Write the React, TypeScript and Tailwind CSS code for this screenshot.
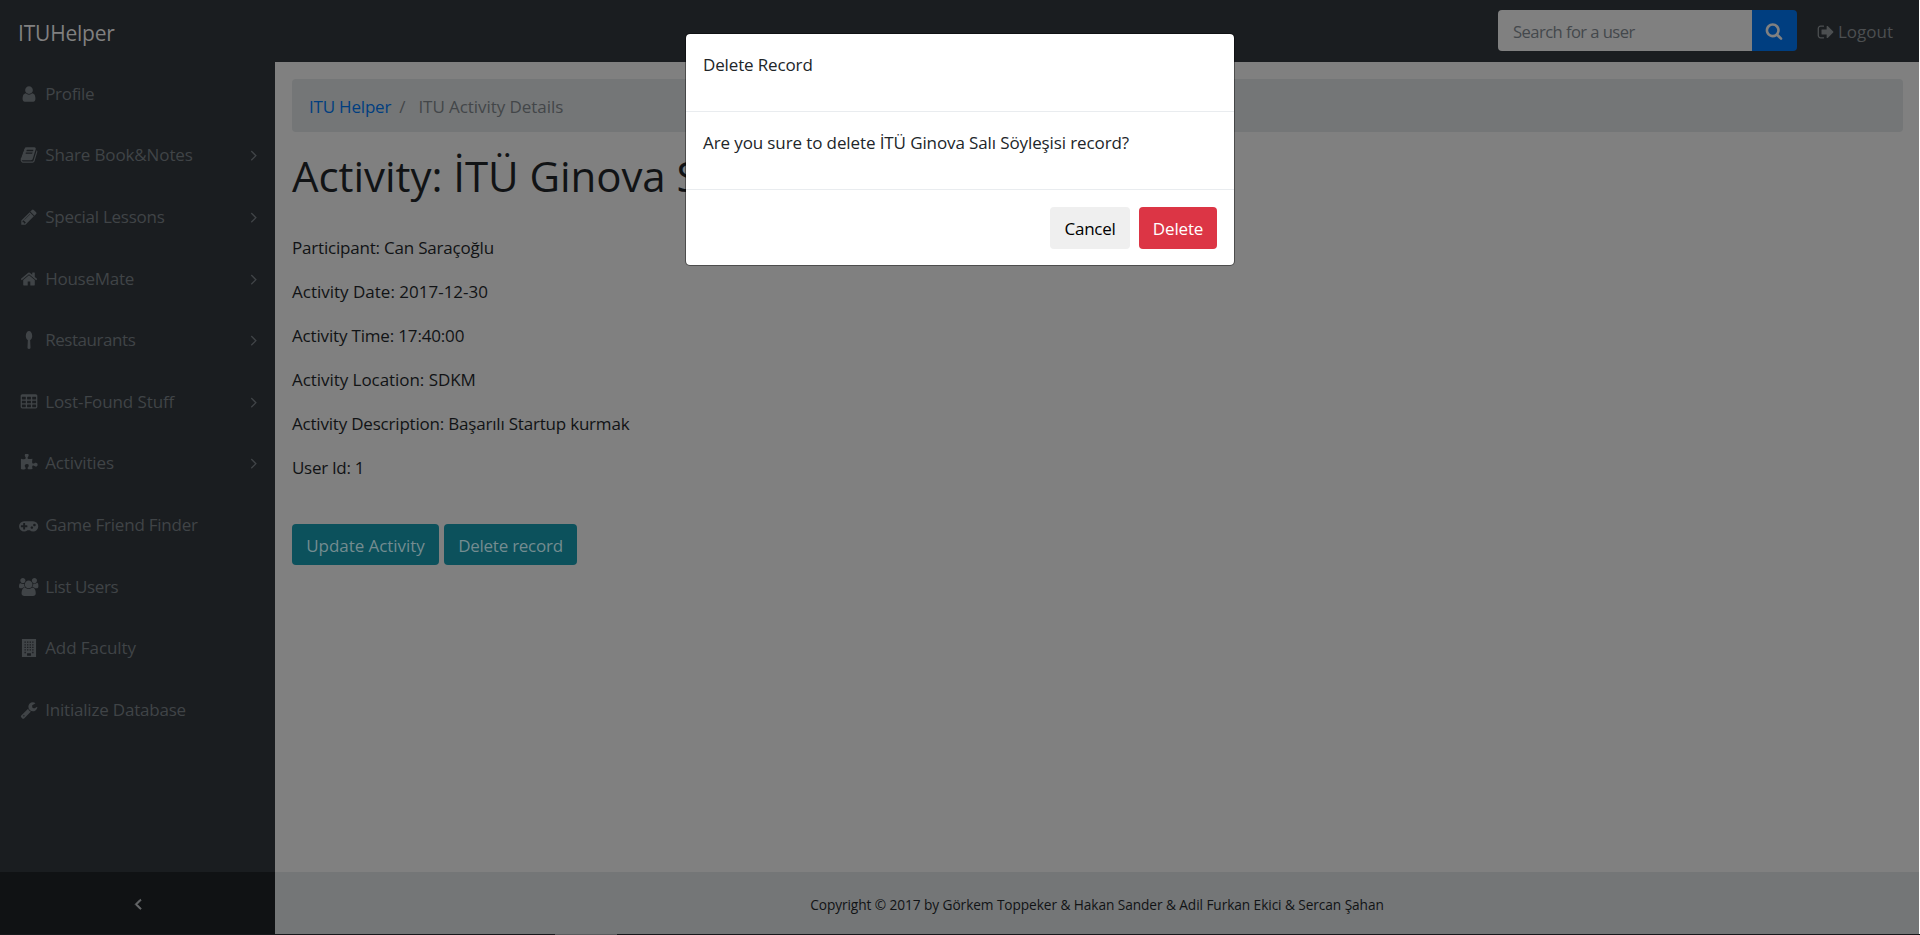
import React from "react";

type Glyph = { box: string; w: string; d: string };

const user: Glyph = { box: "0 0 1792 1792", w: "w-[18px]", d: "M1536 1399q0 109-62.5 187t-150.5 78h-854q-88 0-150.5-78t-62.5-187q0-85 8.5-160.5t31.5-152 58.5-131 94-89 134.5-34.5q131 128 313 128t313-128q76 0 134.5 34.5t94 89 58.5 131 31.5 152 8.5 160.5zm-256-887q0 159-112.5 271.5t-271.5 112.5-271.5-112.5-112.5-271.5 112.5-271.5 271.5-112.5 271.5 112.5 112.5 271.5z" };
const book: Glyph = { box: "0 0 1792 1792", w: "w-[18px]", d: "M1703 478q40 57 18 129l-275 906q-19 64-76.5 107.5t-122.5 43.5h-923q-77 0-148.5-53.5t-99.5-131.5q-24-67-2-127 0-4 3-27t4-37q1-8-3-21.5t-3-19.5q2-11 8-21t16.5-23.5 16.5-23.5q23-38 45-91.5t30-91.5q3-10 .5-30t-.5-28q3-11 17-28t17-23q21-36 42-92t25-90q1-9-2.5-32t.5-28q4-13 22-30.5t22-22.5q19-26 42.5-84.5t27.5-96.5q1-8-3-25.5t-2-26.5q2-8 9-18t18-23 17-21q8-12 16.5-30.5t15-35 16-36 19.5-32 26.5-23.5 36-11.5 47.5 5.5l-1 3q38-9 51-9h761q74 0 114 56t18 130l-274 906q-36 119-71.5 153.5t-128.5 34.5h-869q-27 0-38 15-11 16-1 43 24 70 144 70h923q29 0 56-15.5t35-41.5l300-987q7-22 5-57 38 15 59 43zm-1064 2q-4 13 2 22.5t20 9.5h608q13 0 25.5-9.5t16.5-22.5l21-64q4-13-2-22.5t-20-9.5h-608q-13 0-25.5 9.5t-16.5 22.5zm-83 256q-4 13 2 22.5t20 9.5h608q13 0 25.5-9.5t16.5-22.5l21-64q4-13-2-22.5t-20-9.5h-608q-13 0-25.5 9.5t-16.5 22.5z" };
const pencil: Glyph = { box: "0 0 1792 1792", w: "w-[18px]", d: "M491 1536l91-91-235-235-91 91v107h128v128h107zm523-928q0-22-22-22-10 0-17 7l-542 542q-7 7-7 17 0 22 22 22 10 0 17-7l542-542q7-7 7-17zm-54-192l416 416-832 832h-416v-416zm683 96q0 53-37 90l-166 166-416-416 166-165q36-38 90-38 53 0 91 38l235 234q37 39 37 91z" };
const home: Glyph = { box: "0 0 1792 1792", w: "w-[18px]", d: "M1472 992v480q0 26-19 45t-45 19h-384v-384h-256v384h-384q-26 0-45-19t-19-45v-480q0-1 .5-3t.5-3l575-474 575 474q1 2 1 6zm223-69l-62 74q-8 9-21 11h-3q-13 0-21-7l-692-577-692 577q-12 8-24 7-13-2-21-11l-62-74q-8-10-7-23.5t11-21.5l719-599q32-26 76-26t76 26l244 204v-195q0-14 9-23t23-9h192q14 0 23 9t9 23v408l219 182q10 8 11 21.5t-7 23.5z" };
const spoon: Glyph = { box: "0 0 1792 1792", w: "w-[18px]", d: "M896 0q134 0 227 146t93 350q0 135-56 241t-149 157l37 770q2 53-35 90.5t-89 37.5h-56q-52 0-89-37.5t-35-90.5l37-770q-93-51-149-157t-56-241q0-204 93-350t227-146z" };
const table: Glyph = { box: "0 0 1792 1792", w: "w-[18px]", d: "M224 128h1344q66 0 113 47t47 113v1088q0 66-47 113t-113 47h-1344q-66 0-113-47t-47-113v-1088q0-66 47-113t113-47zM224 384q-32 0-32 32v192q0 32 32 32h320q32 0 32-32v-192q0-32-32-32zM736 384q-32 0-32 32v192q0 32 32 32h320q32 0 32-32v-192q0-32-32-32zM1248 384q-32 0-32 32v192q0 32 32 32h320q32 0 32-32v-192q0-32-32-32zM224 768q-32 0-32 32v192q0 32 32 32h320q32 0 32-32v-192q0-32-32-32zM736 768q-32 0-32 32v192q0 32 32 32h320q32 0 32-32v-192q0-32-32-32zM1248 768q-32 0-32 32v192q0 32 32 32h320q32 0 32-32v-192q0-32-32-32zM224 1152q-32 0-32 32v192q0 32 32 32h320q32 0 32-32v-192q0-32-32-32zM736 1152q-32 0-32 32v192q0 32 32 32h320q32 0 32-32v-192q0-32-32-32zM1248 1152q-32 0-32 32v192q0 32 32 32h320q32 0 32-32v-192q0-32-32-32z" };
const puzzle: Glyph = { box: "0 0 1792 1792", w: "w-[18px]", d: "M1755 1062q0 81-44.5 135t-123.5 54q-41 0-77.5-17.5t-59-38-56.5-38-71-17.5q-110 0-110 124 0 39 16 115t15 115v5q-22 0-33 1-34 3-97.5 11.5t-115.5 13.5-98 5q-61 0-103-26.5t-42-83.5q0-37 17.5-71t38-56.5 38-59 17.5-77.5q0-79-54-123.5t-135-44.5q-84 0-143 45.5t-59 127.5q0 43 15 83t33.5 64.5 33.5 53 15 50.5q0 45-46 89-37 35-117 35-95 0-245-24-9-2-27.5-4t-27.5-4l-13-2q-1 0-3-1-2 0-2-1v-1024q2 1 17.5 3.5t34 5 21.5 3.5q150 24 245 24 80 0 117-35 46-44 46-89 0-22-15-50.5t-33.5-53-33.5-64.5-15-83q0-82 59-127.5t144-45.5q80 0 134 44.5t54 123.5q0 41-17.5 77.5t-38 59-38 56.5-17.5 71q0 57 42 83.5t103 26.5q64 0 180-15t163-17v2q-1 2-3.5 17.5t-5 34-3.5 21.5q-24 150-24 245 0 80 35 117 44 46 89 46 22 0 50.5-15t53-33.5 64.5-33.5 83-15q82 0 127.5 59t45.5 143z" };
const gamepad: Glyph = { box: "0 0 1920 1792", w: "w-[19.3px]", d: "M832 1088v-128q0-14-9-23t-23-9h-192v-192q0-14-9-23t-23-9h-128q-14 0-23 9t-9 23v192h-192q-14 0-23 9t-9 23v128q0 14 9 23t23 9h192v192q0 14 9 23t23 9h128q14 0 23-9t9-23v-192h192q14 0 23-9t9-23zm576 64q0-53-37.5-90.5t-90.5-37.5-90.5 37.5-37.5 90.5 37.5 90.5 90.5 37.5 90.5-37.5 37.5-90.5zm256-256q0-53-37.5-90.5t-90.5-37.5-90.5 37.5-37.5 90.5 37.5 90.5 90.5 37.5 90.5-37.5 37.5-90.5zm256 128q0 212-150 362t-362 150q-192 0-338-128h-220q-146 128-338 128-212 0-362-150t-150-362 150-362 362-150h896q212 0 362 150t150 362z" };
const users: Glyph = { box: "-64 0 1920 1792", w: "w-[19.3px]", d: "M529 896q-162 5-265 128h-134q-82 0-138-40.5t-56-118.5q0-353 124-353 6 0 43.5 21t97.5 42.5 119 21.5q67 0 133-23-5 37-5 66 0 159 93 293zm1071 637q0 120-73 189.5t-194 69.5h-874q-121 0-194-69.5t-73-189.5q0-53 3.5-103.5t14-109 26.5-108.5 43-97.5 62-81 85.5-53.5 111.5-20q10 0 43 21.5t73 48 107 48 135 21.5 135-21.5 107-48 73-48 43-21.5q61 0 111.5 20t85.5 53.5 62 81 43 97.5 26.5 108.5 14 109 3.5 103.5zm-1024-1277q0 106-75 181t-181 75-181-75-75-181 75-181 181-75 181 75 75 181zm704 384q0 159-112.5 271.5t-271.5 112.5-271.5-112.5-112.5-271.5 112.5-271.5 271.5-112.5 271.5 112.5 112.5 271.5zm576 225q0 78-56 118.5t-138 40.5h-134q-103-123-265-128 93-134 93-293 0-29-5-66 66 23 133 23 59 0 119-21.5t97.5-42.5 43.5-21q124 0 124 353zm-128-609q0 106-75 181t-181 75-181-75-75-181 75-181 181-75 181 75 75 181z" };
const building: Glyph = { box: "0 0 1792 1792", w: "w-[18px]", d: "M192 0h1408v1792h-1408zM448 256h128v128h-128zM704 256h128v128h-128zM960 256h128v128h-128zM1216 256h128v128h-128zM448 512h128v128h-128zM704 512h128v128h-128zM960 512h128v128h-128zM1216 512h128v128h-128zM448 768h128v128h-128zM704 768h128v128h-128zM960 768h128v128h-128zM1216 768h128v128h-128zM448 1024h128v128h-128zM704 1024h128v128h-128zM960 1024h128v128h-128zM1216 1024h128v128h-128zM448 1280h128v128h-128zM1216 1280h128v128h-128zM704 1408h384v256h-384z" };
const wrench: Glyph = { box: "0 0 1792 1792", w: "w-[18px]", d: "M448 1472q0-26-19-45t-45-19-45 19-19 45 19 45 45 19 45-19 19-45zm644-420l-682 682q-37 37-90 37-52 0-91-37l-106-108q-38-36-38-90 0-53 38-91l681-681q39 98 114.5 173.5t173.5 114.5zm634-435q0 39-23 106-47 134-164.5 217.5t-258.5 83.5q-185 0-316.5-131.5t-131.5-316.5 131.5-316.5 316.5-131.5q58 0 121.5 16.5t107.5 46.5q16 11 16 28t-16 28l-293 169v224l193 107q5-3 79-48.5t135.5-81 70.5-35.5q15 0 23.5 10t8.5 25z" };
const search: Glyph = { box: "0 0 1792 1792", w: "w-[18px]", d: "M1216 832q0-185-131.5-316.5t-316.5-131.5-316.5 131.5-131.5 316.5 131.5 316.5 316.5 131.5 316.5-131.5 131.5-316.5zm512 832q0 52-38 90t-90 38q-54 0-90-38l-343-342q-179 124-399 124-143 0-273.5-55.5t-225-150-150-225-55.5-273.5 55.5-273.5 150-225 225-150 273.5-55.5 273.5 55.5 225 150 150 225 55.5 273.5q0 220-124 399l343 343q37 37 37 90z" };
const signOut: Glyph = { box: "0 0 1792 1792", w: "w-[18px]", d: "M704 1440q0 4 1 20t.5 26.5-3 23.5-10 19.5-20.5 6.5h-320q-119 0-203.5-84.5t-84.5-203.5v-704q0-119 84.5-203.5t203.5-84.5h320q13 0 22.5 9.5t9.5 22.5q0 4 1 20t.5 26.5-3 23.5-10 19.5-20.5 6.5h-320q-66 0-113 47t-47 113v704q0 66 47 113t113 47h312l11.5 1 11.5 3 8 5.5 7 9 2 13.5zm928-544q0 26-19 45l-544 544q-19 19-45 19t-45-19-19-45v-288h-448q-26 0-45-19t-19-45v-384q0-26 19-45t45-19h448v-288q0-26 19-45t45-19 45 19l544 544q19 19 19 45z" };
const angle: Glyph = { box: "0 0 1792 1792", w: "w-[18px]", d: "M1171 960q0 13-10 23l-466 466q-10 10-23 10t-23-10l-50-50q-10-10-10-23t10-23l393-393-393-393q-10-10-10-23t10-23l50-50q10-10 23-10t23 10l466 466q10 10 10 23z" };

function Icon({ glyph, className = "" }: { glyph: Glyph; className?: string }) {
  return (
    <svg viewBox={glyph.box} className={`h-[18px] shrink-0 ${glyph.w} ${className}`} fill="currentColor" fillRule="evenodd" aria-hidden="true">
      <path d={glyph.d} />
    </svg>
  );
}

const menu: { icon: Glyph; label: string; track: string; more?: boolean }[] = [
  { icon: user, label: "Profile", track: "tracking-[-0.3px]" },
  { icon: book, label: "Share Book&Notes", track: "tracking-[-0.13px]", more: true },
  { icon: pencil, label: "Special Lessons", track: "tracking-[-0.26px]", more: true },
  { icon: home, label: "HouseMate", track: "tracking-[-0.26px]", more: true },
  { icon: spoon, label: "Restaurants", track: "tracking-[-0.45px]", more: true },
  { icon: table, label: "Lost-Found Stuff", track: "tracking-[-0.1px]", more: true },
  { icon: puzzle, label: "Activities", track: "tracking-[-0.13px]", more: true },
  { icon: gamepad, label: "Game Friend Finder", track: "tracking-[-0.23px]" },
  { icon: users, label: "List Users", track: "tracking-[-0.38px]" },
  { icon: building, label: "Add Faculty", track: "tracking-[-0.08px]" },
  { icon: wrench, label: "Initialize Database", track: "tracking-[-0.2px]" },
];

const details: { text: string; track: string }[] = [
  { text: "Participant: Can Saraçoğlu", track: "tracking-[-0.2px]" },
  { text: "Activity Date: 2017-12-30", track: "tracking-[0px]" },
  { text: "Activity Time: 17:40:00", track: "tracking-[-0.17px]" },
  { text: "Activity Location: SDKM", track: "tracking-[-0.05px]" },
  { text: "Activity Description: Başarılı Startup kurmak", track: "tracking-[-0.2px]" },
  { text: "User Id: 1", track: "tracking-[-0.3px]" },
];

function Header() {
  return (
    <header className="flex h-[62px] shrink-0 items-center justify-between bg-[#1a1d20] pl-[18px] pr-[26px]">
      <span className="pt-[3px] text-[21px] tracking-[-0.2px] text-[#808080]">ITUHelper</span>
      <div className="flex items-center pb-px">
        <div className="flex h-[41px] w-[254px] items-center rounded-l-[4px] bg-[#808080] pl-[15px] pt-[2px] text-[16.6px] tracking-[-0.56px] text-[#44484c]">Search for a user</div>
        <div className="flex h-[41px] w-[45px] items-center justify-center rounded-r-[4px] bg-[#003e80] pt-px text-[#808080]">
          <Icon glyph={search} />
        </div>
        <div className="ml-[20px] flex items-center pt-[2px] text-[#4c4f51]">
          <Icon glyph={signOut} />
          <span className="ml-[3px] tracking-[0px]">Logout</span>
        </div>
      </div>
    </header>
  );
}

function Sidebar() {
  return (
    <aside className="flex w-[275px] shrink-0 flex-col bg-[#1a1d20] text-[#404447]">
      <nav className="flex-1">
        {menu.map((item) => (
          <div key={item.label} className="flex h-[61.6px] items-center pl-[17.6px] pr-[11.6px] pt-[2px]">
            <span className="flex w-[22.6px] justify-center">
              <Icon glyph={item.icon} />
            </span>
            <span className={`ml-[5px] flex-1 ${item.track}`}>{item.label}</span>
            {item.more && <Icon glyph={angle} />}
          </div>
        ))}
      </nav>
      <div className="flex h-[62px] items-center justify-center bg-[#101214] pt-[4px] text-[#67696b]">
        <Icon glyph={angle} className="rotate-180 stroke-current stroke-[90]" />
      </div>
    </aside>
  );
}

function Content() {
  return (
    <main className="flex flex-1 flex-col bg-[#808080] text-[#111315]">
      <div className="flex-1 pl-[17px] pr-[16px] pt-[17px]">
        <div className="flex h-[53px] items-center rounded-[4px] bg-[#747677] pl-[17px] pt-[2px]">
          <span className="tracking-[-0.2px] text-[#003e80]">ITU Helper</span>
          <span className="ml-[8px] text-[#434649]">/</span>
          <span className="ml-[13px] tracking-[-0.06px] text-[#434649]">ITU Activity Details</span>
        </div>
        <h1 className="mt-[17px] h-[54px] whitespace-nowrap text-[42px] leading-[54px] tracking-[-0.05px]">Activity: İTÜ Ginova Salı Söyleşisi</h1>
        <div className="mt-[32px]">
          {details.map((row) => (
            <p key={row.text} className={`h-[44px] leading-[26px] ${row.track}`}>{row.text}</p>
          ))}
        </div>
        <div className="mt-[25px] flex gap-[5px] text-[#748c90]">
          <button className="h-[41px] w-[147px] rounded-[4px] bg-[#0c515c] pt-[2px] tracking-[-0.05px]">Update Activity</button>
          <button className="h-[41px] w-[133px] rounded-[4px] bg-[#0c515c] pt-[2px] tracking-[-0.25px]">Delete record</button>
        </div>
      </div>
      <footer className="flex h-[62px] items-center justify-center bg-[#747677] pt-[4px] text-[13.7px]">
        <span className="tracking-[-0.08px]">Copyright © 2017 by Görkem Toppeker &amp; Hakan Sander &amp; Adil Furkan Ekici &amp; Sercan Şahan</span>
      </footer>
    </main>
  );
}

function Dialog() {
  return (
    <div role="dialog" className="absolute left-[685px] top-[33px] w-[550px] rounded-[5px] border border-black/40 bg-white bg-clip-padding text-[#212529]">
      <div className="h-[78px] border-b border-[#e9ecef] px-[17px] pt-[17px] leading-[27px] tracking-[-0.14px]">Delete Record</div>
      <div className="h-[78px] border-b border-[#e9ecef] px-[17px] pt-[17px] leading-[27px] tracking-[-0.11px]">Are you sure to delete İTÜ Ginova Salı Söyleşisi record?</div>
      <div className="flex h-[75px] justify-end gap-[9px] pr-[17px] pt-[17px]">
        <button className="h-[42px] w-[80px] rounded-[4px] bg-[#efefef] pt-[2px] tracking-[-0.27px] text-black">Cancel</button>
        <button className="h-[42px] w-[78px] rounded-[4px] bg-[#dc3545] pt-[2px] tracking-[-0.17px] text-white">Delete</button>
      </div>
    </div>
  );
}

export default function App() {
  return (
    <div className="relative flex h-[935px] w-[1920px] flex-col overflow-hidden bg-white font-['Open_Sans','Noto_Sans',sans-serif] text-[17px] leading-[26px]">
      <div className="flex h-[934px] w-[1919px] flex-col">
        <Header />
        <div className="flex flex-1">
          <Sidebar />
          <Content />
        </div>
      </div>
      <div className="flex h-px bg-[#17181b]">
        <div className="ml-[555px] w-[62px] bg-[#5a5b5d]" />
      </div>
      <Dialog />
    </div>
  );
}
